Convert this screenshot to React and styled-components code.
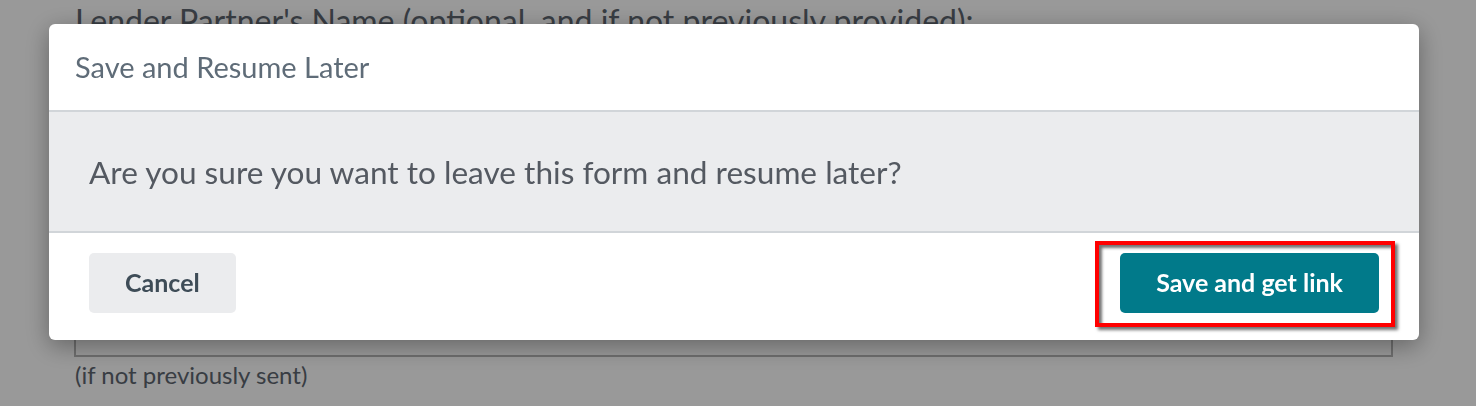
import React from "react";
import styled, { createGlobalStyle } from "styled-components";

const GlobalStyle = createGlobalStyle`
  html, body {
    margin: 0;
    padding: 0;
    background: #ffffff;
    font-family: Lato, "Open Sans", sans-serif;
  }
  * {
    box-sizing: border-box;
  }
`;

const Page = styled.div`
  width: 1476px;
  height: 406px;
  overflow: hidden;
  padding: 0 83px 0 74px;
  color: #5e6670;
`;

const FieldLabel = styled.div`
  font-size: 32px;
  line-height: 38px;
  margin-top: 2px;
  padding-left: 1px;
`;

const FieldBox = styled.div`
  height: 300px;
  margin-top: 17px;
  border: 2px solid #b8b8b8;
`;

const FieldHint = styled.div`
  font-size: 24px;
  line-height: 28px;
  margin-top: 4px;
  padding-left: 1px;
`;

const Overlay = styled.div`
  position: fixed;
  inset: 0;
  background: rgba(0, 0, 0, 0.4);
  padding: 24px 0 0 49px;
`;

const Modal = styled.div`
  width: 1370px;
  background: #ffffff;
  border-radius: 6px;
  box-shadow: 0 6px 24px rgba(0, 0, 0, 0.35);
  overflow: hidden;
`;

const ModalHeader = styled.div`
  height: 88px;
  display: flex;
  align-items: center;
  padding: 0 26px 2px;
  font-size: 29px;
  color: #5f6c78;
  border-bottom: 2px solid #d1d5d9;
`;

const ModalBody = styled.div`
  height: 121px;
  display: flex;
  align-items: center;
  padding: 0 40px;
  background: #ebecee;
  font-size: 31.6px;
  color: #545961;
  border-bottom: 2px solid #d1d5d9;
`;

const ModalFooter = styled.div`
  height: 107px;
  display: flex;
  align-items: flex-start;
  justify-content: space-between;
  padding: 20px 40px 0;
`;

const Button = styled.button`
  height: 60px;
  border: none;
  border-radius: 5px;
  font-family: Lato, "Open Sans", sans-serif;
  font-size: 25px;
  font-weight: 700;
  padding: 0 ${(p) => p.$pad}px 2px;
  background: ${(p) => (p.$primary ? "#017a8a" : "#ebecee")};
  color: ${(p) => (p.$primary ? "#ffffff" : "#3e4c57")};
  cursor: pointer;
`;

const Highlighted = styled.div`
  position: relative;
`;

const HighlightFrame = styled.span`
  position: absolute;
  left: -25px;
  right: -16px;
  top: -12px;
  bottom: -14px;
  border: 4px solid #ff0000;
  box-shadow: 3px 3px 3px rgba(0, 0, 0, 0.55),
    inset 3px 3px 3px rgba(0, 0, 0, 0.55);
  pointer-events: none;
`;

export default function App() {
  return (
    <>
      <GlobalStyle />
      <Page>
        <FieldLabel>
          Lender Partner's Name (optional, and if not previously provided):
        </FieldLabel>
        <FieldBox />
        <FieldHint>(if not previously sent)</FieldHint>
      </Page>
      <Overlay>
        <Modal>
          <ModalHeader>Save and Resume Later</ModalHeader>
          <ModalBody>
            Are you sure you want to leave this form and resume later?
          </ModalBody>
          <ModalFooter>
            <Button $pad={36}>Cancel</Button>
            <Highlighted>
              <Button $primary $pad={36}>
                Save and get link
              </Button>
              <HighlightFrame />
            </Highlighted>
          </ModalFooter>
        </Modal>
      </Overlay>
    </>
  );
}
